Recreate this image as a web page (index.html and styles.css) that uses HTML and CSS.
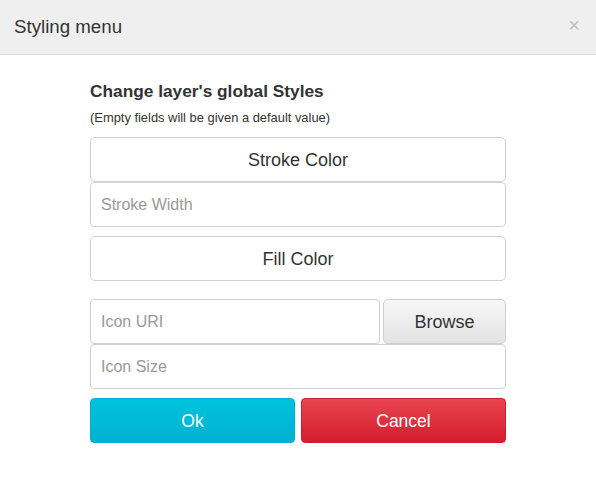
FILE: index.html
```html
<!DOCTYPE html>
<html>
<head>
<meta charset="utf-8">
<link rel="stylesheet" href="styles.css">
</head>
<body>
<div class="modal">
  <div class="modal-header">
    <h1 class="modal-title">Styling menu</h1>
    <span class="close">&times;</span>
  </div>
  <div class="modal-body">
    <h2 class="heading">Change layer's global Styles</h2>
    <p class="note">(Empty fields will be given a default value)</p>
    <button class="btn block">Stroke Color</button>
    <input class="field" type="text" placeholder="Stroke Width">
    <button class="btn block gap-top">Fill Color</button>
    <div class="row gap-top2">
      <input class="field grow" type="text" placeholder="Icon URI">
      <button class="btn browse">Browse</button>
    </div>
    <input class="field" type="text" placeholder="Icon Size">
    <div class="actions">
      <button class="btn ok">Ok</button>
      <button class="btn cancel">Cancel</button>
    </div>
  </div>
</div>
</body>
</html>
```

FILE: styles.css
```css
html, body {
  margin: 0;
  padding: 0;
  background: #fff;
  font-family: "Liberation Sans", Arial, sans-serif;
  color: #333;
}
.modal {
  width: 596px;
}
.modal-header {
  height: 55px;
  background: #efefef;
  border-bottom: 1px solid #dcdcdc;
  display: flex;
  align-items: center;
  justify-content: space-between;
  padding: 0 14px;
  box-sizing: border-box;
}
.modal-title {
  margin: 0;
  font-size: 18.7px;
  font-weight: normal;
  color: #333;
}
.close {
  font-size: 20px;
  color: #bdbdbd;
  margin-top: -3px;
  margin-right: 2px;
}
.modal-body {
  width: 416px;
  margin: 0 auto;
  padding-top: 26px;
  display: flex;
  flex-direction: column;
}
.heading {
  margin: 0;
  font-size: 17.3px;
  font-weight: bold;
  color: #333;
  line-height: 20px;
}
.note {
  margin: 9px 0 12px;
  font-size: 12.9px;
  line-height: 15px;
  color: #333;
}
.btn {
  font-family: inherit;
  font-size: 18px;
  color: #333;
  background: #fff;
  border: 1px solid #d2d2d2;
  border-radius: 5px;
  height: 45px;
  box-sizing: border-box;
  cursor: pointer;
  padding: 2px 0 0;
}
.block {
  width: 100%;
}
.gap-top { margin-top: 9px; }
.gap-top2 { margin-top: 18px; }
.field {
  font-family: inherit;
  font-size: 16px;
  height: 45px;
  box-sizing: border-box;
  border: 1px solid #d2d2d2;
  border-radius: 4px;
  padding: 0 10px;
  color: #333;
  margin: 0;
  outline: none;
  width: 100%;
}
.field::placeholder {
  color: #999;
}
.row {
  display: flex;
  gap: 3px;
}
.grow {
  flex: 1;
  width: auto;
  min-width: 0;
}
.browse {
  width: 123px;
  background: linear-gradient(#f7f7f7, #e3e3e3);
  border-color: #cfcfcf;
}
.actions {
  display: flex;
  gap: 6px;
  margin-top: 9px;
}
.actions .btn {
  flex: 1;
  color: #fff;
  border-radius: 4px;
  font-size: 17.5px;
}
.ok {
  background: linear-gradient(#00c3dd, #00b1d1);
  border-color: #00b0cf;
}
.cancel {
  background: linear-gradient(#ea4550, #d41c2c);
  border-color: #cf1d2c;
}
```
